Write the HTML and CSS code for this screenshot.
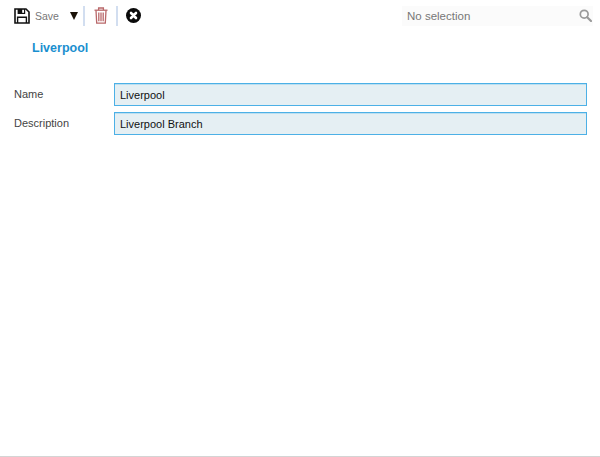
FILE: index.html
```html
<!DOCTYPE html>
<html lang="en">
<head>
<meta charset="utf-8">
<title>Liverpool</title>
<link rel="stylesheet" href="styles.css">
</head>
<body>
<div class="page">
  <header class="toolbar">
    <div class="actions">
      <svg class="icon-save" viewBox="0 0 16 16" width="16" height="16"><path d="M1 1h11l3 3v11H1z" fill="#fff" stroke="#111" stroke-width="1.6"/><path d="M3.6 1h7.6v5H3.6z" fill="#111"/><rect x="8.2" y="1.8" width="1.8" height="3" fill="#fff"/><path d="M3.6 15V9.2h8.8V15" fill="none" stroke="#111" stroke-width="1.4"/></svg>
      <span class="save-label">Save</span>
      <span class="caret"></span>
      <span class="sep sep-a"></span>
      <svg class="icon-trash" viewBox="0 0 14 17" width="14" height="17"><g fill="none" stroke="#b9686a" stroke-width="1.3"><path d="M0.5 3.2h13"/><path d="M4.6 3V1h4.8v2"/><path d="M2 3.4l.7 12.8h8.6l.7-12.8"/><path d="M4.8 5.5v8.8M7 5.5v8.8M9.2 5.5v8.8"/></g></svg>
      <span class="sep sep-b"></span>
      <svg class="icon-close" viewBox="0 0 15 15" width="15" height="15"><circle cx="7.5" cy="7.5" r="7.5" fill="#0a0a0a"/><path d="M5 5l5 5M10 5l-5 5" stroke="#fff" stroke-width="2.6" stroke-linecap="round"/></svg>
    </div>
    <div class="selector">
      <span>No selection</span>
      <svg viewBox="0 0 13 13" width="13" height="13"><circle cx="5.2" cy="5.2" r="3.9" fill="none" stroke="#9a9a9a" stroke-width="1.7"/><path d="M8.2 8.2l3.8 3.8" stroke="#9a9a9a" stroke-width="2.2" stroke-linecap="round"/></svg>
    </div>
  </header>
  <h1 class="title">Liverpool</h1>
  <main class="form">
    <div class="row"><label class="label">Name</label><div class="field">Liverpool</div></div>
    <div class="row"><label class="label">Description</label><div class="field">Liverpool Branch</div></div>
  </main>
</div>
</body>
</html>
```

FILE: styles.css
```css
* { box-sizing: border-box; }
html, body { margin: 0; height: 100%; background: #fff; }
body { font-family: "Liberation Sans", Arial, sans-serif; font-size: 11px; color: #333; overflow: hidden; }
.page { height: 457px; border-bottom: 1px solid #d4d4d4; }
.toolbar { display: flex; justify-content: space-between; align-items: center; height: 31px; padding: 0 7px 0 14px; }
.actions { display: flex; align-items: center; }
.icon-save { display: block; }
.save-label { margin-left: 5px; color: #777; font-size: 10.5px; width: 35px; }
.caret { width: 0; height: 0; border-left: 4px solid transparent; border-right: 4px solid transparent; border-top: 8px solid #1a1208; }
.sep { width: 2px; height: 20px; background: #d2def0; }
.sep-a { margin-left: 5px; margin-right: 9px; }
.icon-trash { display: block; }
.sep-b { margin-left: 8px; margin-right: 8px; }
.icon-close { display: block; }
.selector { display: flex; align-items: center; justify-content: space-between; width: 191px; height: 20px; padding: 0 1px 0 5px; background: #fbfbfb; color: #777; font-size: 11.5px; }
.title { margin: 9px 0 0 32px; font-size: 12.5px; line-height: 16px; font-weight: bold; color: #1a8fcf; }
.form { margin-top: 27px; padding: 0 13px 0 14px; display: flex; flex-direction: column; gap: 6px; }
.row { display: flex; align-items: center; }
.label { width: 100px; color: #444; font-size: 11px; position: relative; top: -1px; }
.field { flex: 1; height: 23px; line-height: 23px; padding-left: 5px; background: #e5eff3; border: 1px solid #4cb0e6; box-shadow: inset 0 1px 0 #bcdff0; color: #111; font-size: 11px; }
```
